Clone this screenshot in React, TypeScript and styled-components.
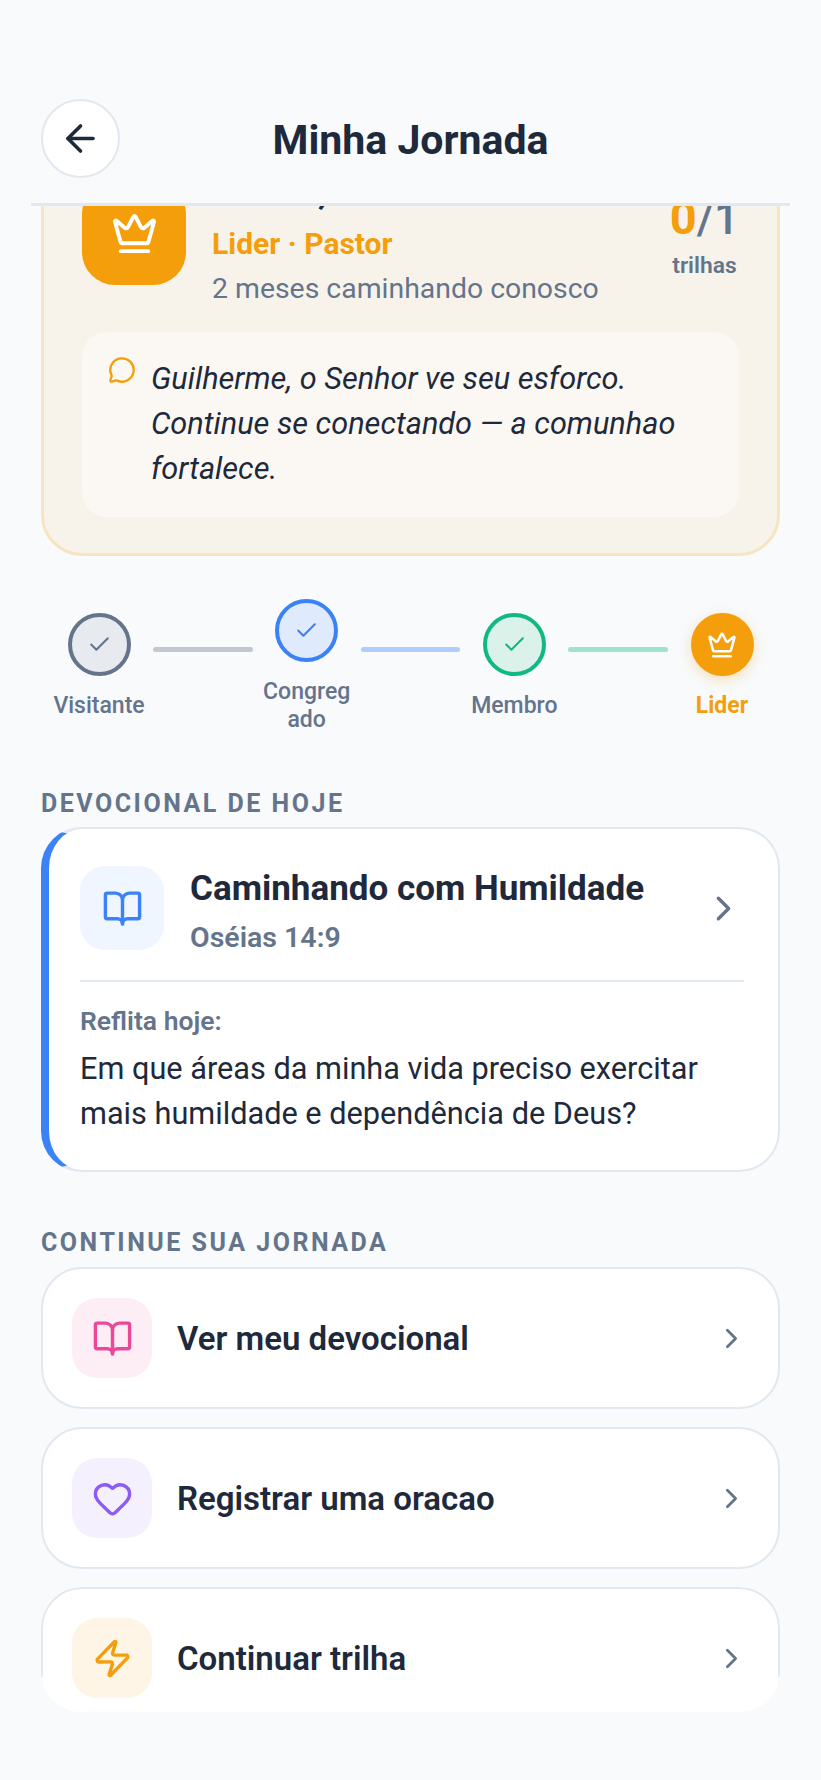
import { ArrowLeft, BookOpen, Check, ChevronRight, Crown, Heart, MessageCircle, Zap } from 'lucide-react';
import { Fragment } from 'react';
import type { ReactNode } from 'react';
import styled, { createGlobalStyle } from 'styled-components';

const GlobalStyle = createGlobalStyle`
  html, body {
    margin: 0;
    padding: 0;
    background: #f8fafc;
  }
  * {
    box-sizing: border-box;
  }
`;

const Screen = styled.div`
  width: 821px;
  height: 1780px;
  display: flex;
  flex-direction: column;
  overflow: hidden;
  background: #f8fafc;
  color: #1e293b;
  font-family: Roboto, 'Noto Sans', sans-serif;
`;

const Header = styled.header`
  flex: none;
  height: 206px;
  margin: 0 31px;
  padding: 99px 10px 0;
  display: flex;
  justify-content: space-between;
  align-items: flex-start;
  border-bottom: 3px solid #e2e8f0;
`;

const BackButton = styled.button`
  width: 79px;
  height: 79px;
  padding: 0;
  display: flex;
  align-items: center;
  justify-content: center;
  border-radius: 50%;
  border: 2px solid #e2e8f0;
  background: #ffffff;
  color: #1e293b;
`;

const Title = styled.h1`
  margin: 17px 0 0;
  font-size: 41px;
  line-height: 48px;
  font-weight: 700;
`;

const HeaderSpacer = styled.div`
  width: 79px;
`;

const Viewport = styled.main`
  flex: none;
  height: 1506px;
  overflow: hidden;
  padding: 0 41px;
`;

const HeroCard = styled.section`
  margin-top: -66px;
  height: 416px;
  padding: 38px;
  border: 3px solid #f7e4c0;
  border-radius: 41px;
  background: #f7f3eb;
`;

const HeroRow = styled.div`
  display: flex;
  gap: 26px;
  height: 151px;
`;

const HeroBadge = styled.div`
  flex: none;
  width: 104px;
  height: 104px;
  display: flex;
  align-items: center;
  justify-content: center;
  border-radius: 33px;
  background: #f59e0b;
  color: #ffffff;
`;

const HeroText = styled.div`
  flex: 1;
  min-width: 0;
`;

const HeroName = styled.div`
  margin-top: -13px;
  font-size: 37px;
  line-height: 46px;
  font-weight: 700;
  white-space: nowrap;
`;

const HeroRole = styled.div`
  margin-top: 13px;
  font-size: 30px;
  line-height: 34px;
  font-weight: 700;
  color: #f59e0b;
`;

const HeroSince = styled.div`
  margin-top: 11px;
  font-size: 28.4px;
  line-height: 34px;
  color: #64748b;
`;

const HeroStats = styled.div`
  flex: none;
  text-align: center;
  color: #64748b;
`;

const StatsCount = styled.div`
  margin-top: 11px;
  font-size: 44px;
  line-height: 52px;
  font-weight: 500;
  b {
    font-size: 47px;
    font-weight: 700;
    color: #f59e0b;
  }
`;

const StatsLabel = styled.div`
  margin-top: 7px;
  font-size: 22.8px;
  line-height: 28px;
  font-weight: 600;
`;

const QuoteBox = styled.div`
  height: 185px;
  padding: 24px 26px;
  display: flex;
  gap: 15px;
  border-radius: 25px;
  background: #fbf8f3;
  color: #f59e0b;
`;

const QuoteText = styled.p`
  margin: 0;
  font-size: 30.7px;
  line-height: 45px;
  font-style: italic;
  color: #1e293b;
`;

const Stepper = styled.div`
  margin-top: 43px;
  padding: 0 12px;
  display: flex;
  align-items: center;
`;

const Step = styled.div`
  flex: none;
  width: 92px;
  display: flex;
  flex-direction: column;
  align-items: center;
`;

const StepDot = styled.div<{ $color: string; $tint: string }>`
  width: 63px;
  height: 63px;
  display: flex;
  align-items: center;
  justify-content: center;
  border-radius: 50%;
  border: 4px solid ${(p) => p.$color};
  background: ${(p) => p.$tint};
  color: ${(p) => p.$color};
`;

const LeaderDot = styled(StepDot)`
  color: #ffffff;
  box-shadow: 0 4px 14px rgba(245, 158, 11, 0.28);
`;

const StepLabel = styled.div<{ $active?: boolean }>`
  margin-top: 16px;
  width: 100%;
  text-align: center;
  overflow-wrap: anywhere;
  font-size: 23px;
  line-height: 28px;
  font-weight: ${(p) => (p.$active ? 700 : 500)};
  color: ${(p) => (p.$active ? '#f59e0b' : '#64748b')};
`;

const StepLine = styled.div<{ $color: string }>`
  flex: 1;
  height: 5px;
  margin: 0 8px 34px;
  border-radius: 3px;
  background: ${(p) => p.$color};
`;

const SectionTitle = styled.h2<{ $above: number; $below: number }>`
  margin: ${(p) => p.$above}px 0 ${(p) => p.$below}px;
  font-size: 25px;
  line-height: 28px;
  font-weight: 700;
  letter-spacing: 2.5px;
  color: #64748b;
`;

const DevotionalCard = styled.section`
  height: 345px;
  padding: 37px 34px 0 31px;
  border: 2px solid #e2e8f0;
  border-left: 8px solid #3b82f6;
  border-radius: 41px;
  background: #ffffff;
`;

const DevotionalHead = styled.div`
  display: flex;
  align-items: center;
  gap: 26px;
  padding-bottom: 30px;
  border-bottom: 2px solid #e2e8f0;
`;

const IconTile = styled.div<{ $tint: string; $color: string; $size: number }>`
  flex: none;
  width: ${(p) => p.$size}px;
  height: ${(p) => p.$size}px;
  display: flex;
  align-items: center;
  justify-content: center;
  border-radius: 25px;
  background: ${(p) => p.$tint};
  color: ${(p) => p.$color};
  position: relative;
  z-index: 1;
`;

const DevotionalInfo = styled.div`
  flex: 1;
  margin: 2px 0 -4px;
`;

const DevotionalName = styled.div`
  font-size: 35px;
  line-height: 42px;
  font-weight: 700;
`;

const DevotionalRef = styled.div`
  margin-top: 12px;
  font-size: 28.5px;
  line-height: 32px;
  font-weight: 600;
  color: #64748b;
`;

const Arrow = styled.span`
  display: flex;
  color: #64748b;
  position: relative;
  z-index: 1;
`;

const ReflectLabel = styled.div`
  margin-top: 24px;
  font-size: 26.5px;
  line-height: 30px;
  font-weight: 600;
  color: #64748b;
`;

const ReflectText = styled.p`
  margin: 10px 0 0;
  font-size: 30.7px;
  line-height: 45px;
`;

const ActionList = styled.div`
  display: flex;
  flex-direction: column;
  gap: 18px;
`;

const ActionCard = styled.div<{ $faded?: boolean }>`
  position: relative;
  height: 142px;
  flex: none;
  padding: 0 30px 0 29px;
  display: flex;
  align-items: center;
  gap: 25px;
  border: 2px solid #e2e8f0;
  border-radius: 41px;
  background: #ffffff;
  ${(p) =>
    p.$faded &&
    `
    clip-path: inset(0 0 17px 0 round 41px);
    &::after {
      content: '';
      position: absolute;
      left: -2px;
      right: -2px;
      top: 88px;
      bottom: -2px;
      background: #ffffff;
    }
  `}
`;

const ActionLabel = styled.div`
  flex: 1;
  padding-top: 2px;
  font-size: 33px;
  line-height: 40px;
  font-weight: 600;
  position: relative;
  z-index: 1;
`;

type Action = {
  label: string;
  icon: ReactNode;
  tint: string;
  color: string;
};

const actions: Action[] = [
  { label: 'Ver meu devocional', icon: <BookOpen size={41} />, tint: '#fdeef6', color: '#ec4899' },
  { label: 'Registrar uma oracao', icon: <Heart size={41} />, tint: '#f5f0fe', color: '#8b5cf6' },
  { label: 'Continuar trilha', icon: <Zap size={41} />, tint: '#fef5e7', color: '#f59e0b' },
];

const steps = [
  { label: 'Visitante', color: '#64748b', tint: '#e7eaee', line: '#c2c8d2' },
  { label: 'Congregado', color: '#3b82f6', tint: '#dfeafc', line: '#b1cdfb' },
  { label: 'Membro', color: '#10b981', tint: '#dbf2eb', line: '#9fe3cc' },
];

export default function App() {
  return (
    <Screen>
      <GlobalStyle />
      <Header>
        <BackButton aria-label="Voltar">
          <ArrowLeft size={43} />
        </BackButton>
        <Title>Minha Jornada</Title>
        <HeaderSpacer />
      </Header>

      <Viewport>
        <HeroCard>
          <HeroRow>
            <HeroBadge>
              <Crown size={47} />
            </HeroBadge>
            <HeroText>
              <HeroName>Pastor, Guilherme</HeroName>
              <HeroRole>Lider · Pastor</HeroRole>
              <HeroSince>2 meses caminhando conosco</HeroSince>
            </HeroText>
            <HeroStats>
              <StatsCount>
                <b>0</b>/1
              </StatsCount>
              <StatsLabel>trilhas</StatsLabel>
            </HeroStats>
          </HeroRow>
          <QuoteBox>
            <MessageCircle size={28} style={{ flex: 'none' }} />
            <QuoteText>
              Guilherme, o Senhor ve seu esforco. Continue se conectando — a comunhao fortalece.
            </QuoteText>
          </QuoteBox>
        </HeroCard>

        <Stepper>
          {steps.map((step) => (
            <Fragment key={step.label}>
              <Step>
                <StepDot $color={step.color} $tint={step.tint}>
                  <Check size={25} />
                </StepDot>
                <StepLabel>{step.label}</StepLabel>
              </Step>
              <StepLine $color={step.line} />
            </Fragment>
          ))}
          <Step>
            <LeaderDot $color="#f59e0b" $tint="#f59e0b">
              <Crown size={30} />
            </LeaderDot>
            <StepLabel $active>Lider</StepLabel>
          </Step>
        </Stepper>

        <SectionTitle $above={56} $below={9}>DEVOCIONAL DE HOJE</SectionTitle>
        <DevotionalCard>
          <DevotionalHead>
            <IconTile $size={84} $tint="#eff6ff" $color="#3b82f6">
              <BookOpen size={41} />
            </IconTile>
            <DevotionalInfo>
              <DevotionalName>Caminhando com Humildade</DevotionalName>
              <DevotionalRef>Oséias 14:9</DevotionalRef>
            </DevotionalInfo>
            <Arrow>
              <ChevronRight size={41} />
            </Arrow>
          </DevotionalHead>
          <ReflectLabel>Reflita hoje:</ReflectLabel>
          <ReflectText>Em que áreas da minha vida preciso exercitar mais humildade e dependência de Deus?</ReflectText>
        </DevotionalCard>

        <SectionTitle $above={57} $below={10}>CONTINUE SUA JORNADA</SectionTitle>
        <ActionList>
          {actions.map((action, index) => (
            <ActionCard key={action.label} $faded={index === actions.length - 1}>
              <IconTile $size={80} $tint={action.tint} $color={action.color}>
                {action.icon}
              </IconTile>
              <ActionLabel>{action.label}</ActionLabel>
              <Arrow>
                <ChevronRight size={33} />
              </Arrow>
            </ActionCard>
          ))}
        </ActionList>
      </Viewport>
    </Screen>
  );
}
